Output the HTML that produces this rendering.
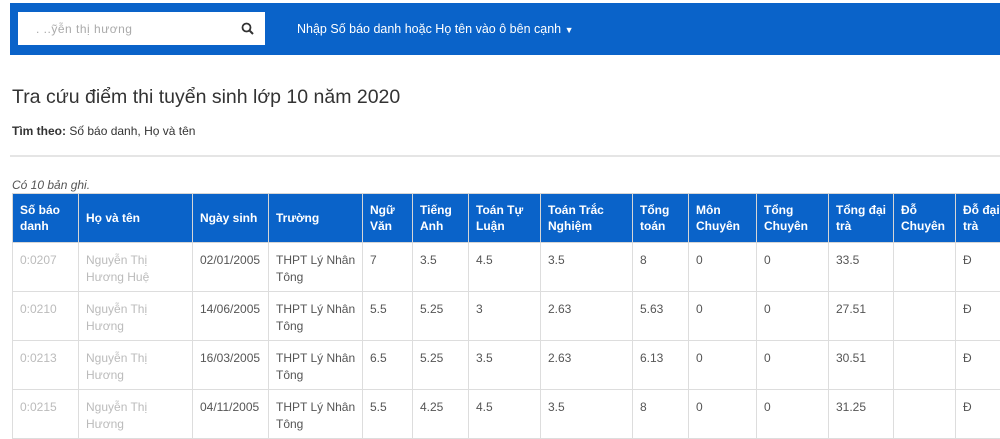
<!DOCTYPE html>
<html><head><meta charset="utf-8"><style>
body{margin:0;width:1000px;height:438px;overflow:hidden;background:#fff;font-family:"Liberation Sans",Arial,sans-serif;color:#333;position:relative}
.nav{position:absolute;left:10px;top:3px;width:990px;height:52px;background:#0a63c9}
.inp{position:absolute;left:8px;top:9px;width:247px;height:33px;background:#fff}
.inp span{position:absolute;left:18px;top:10px;font-size:12px;color:#aaa;letter-spacing:0.5px}
.nt{position:absolute;left:287px;top:19px;color:#fff;font-size:12.5px}
h1{position:absolute;left:12px;top:86px;margin:0;font-weight:normal;font-size:19.5px;color:#333}
.tim{position:absolute;left:12px;top:124px;font-size:12px}
hr{position:absolute;left:10px;top:155px;width:990px;margin:0;border:0;border-top:2px solid #e5e5e5}
.co{position:absolute;left:12px;top:178px;font-size:12px;font-style:italic;color:#555}
table{position:absolute;left:12px;top:193px;width:1003px;border-collapse:collapse;table-layout:fixed;font-size:12px}
th{background:#0a63c9;color:#fff;text-align:left;vertical-align:top;font-size:12px;padding:8px 7px;height:31px;line-height:16px;border:1px solid #d6d6d6;box-sizing:content-box}
th.m{vertical-align:middle}
td{border:1px solid #ddd;vertical-align:top;padding:9px 7px 0;height:39px;line-height:17px;color:#555;white-space:nowrap;overflow:hidden}
.b{color:#bbb}
</style></head><body>
<div class="nav"><div class="inp"><span>. ..ỹễn thị hương</span>
<svg style="position:absolute;left:223px;top:10px" width="13" height="13" viewBox="0 0 13 13"><circle cx="5.5" cy="5.5" r="4" fill="none" stroke="#333" stroke-width="1.8"/><path d="M8.5 8.5L12 12" stroke="#333" stroke-width="2"/></svg></div>
<div class="nt">Nhập Số báo danh hoặc Họ tên vào ô bên cạnh <span style="font-size:9px">▼</span></div></div>
<h1>Tra cứu điểm thi tuyển sinh lớp 10 năm 2020</h1>
<div class="tim"><b>Tìm theo:</b> Số báo danh, Họ và tên</div>
<hr>
<div class="co">Có 10 bản ghi.</div>
<table>
<colgroup><col style="width:66px"><col style="width:114px"><col style="width:76px"><col style="width:94px"><col style="width:50px"><col style="width:56px"><col style="width:72px"><col style="width:92px"><col style="width:56px"><col style="width:68px"><col style="width:72px"><col style="width:65px"><col style="width:62px"><col style="width:60px"></colgroup>
<tr><th>Số báo danh</th><th class="m">Họ và tên</th><th class="m">Ngày sinh</th><th class="m">Trường</th><th>Ngữ Văn</th><th>Tiếng Anh</th><th>Toán Tự Luận</th><th>Toán Trắc Nghiệm</th><th>Tổng toán</th><th>Môn Chuyên</th><th>Tổng Chuyên</th><th>Tổng đại trà</th><th>Đỗ Chuyên</th><th>Đỗ đại trà</th></tr>
<tr><td class="b">0:0207</td><td class="b">Nguyễn Thị<br>Hương Huệ</td><td>02/01/2005</td><td>THPT Lý Nhân<br>Tông</td><td>7</td><td>3.5</td><td>4.5</td><td>3.5</td><td>8</td><td>0</td><td>0</td><td>33.5</td><td></td><td>Đ</td></tr>
<tr><td class="b">0:0210</td><td class="b">Nguyễn Thị<br>Hương</td><td>14/06/2005</td><td>THPT Lý Nhân<br>Tông</td><td>5.5</td><td>5.25</td><td>3</td><td>2.63</td><td>5.63</td><td>0</td><td>0</td><td>27.51</td><td></td><td>Đ</td></tr>
<tr><td class="b">0:0213</td><td class="b">Nguyễn Thị<br>Hương</td><td>16/03/2005</td><td>THPT Lý Nhân<br>Tông</td><td>6.5</td><td>5.25</td><td>3.5</td><td>2.63</td><td>6.13</td><td>0</td><td>0</td><td>30.51</td><td></td><td>Đ</td></tr>
<tr><td class="b">0:0215</td><td class="b">Nguyễn Thị<br>Hương</td><td>04/11/2005</td><td>THPT Lý Nhân<br>Tông</td><td>5.5</td><td>4.25</td><td>4.5</td><td>3.5</td><td>8</td><td>0</td><td>0</td><td>31.25</td><td></td><td>Đ</td></tr>
</table>
</body></html>
